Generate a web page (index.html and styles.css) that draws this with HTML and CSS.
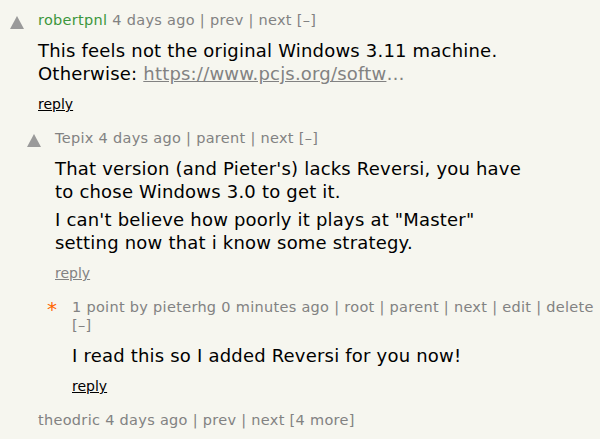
FILE: index.html
```html
<!DOCTYPE html>
<html>
<head>
<meta charset="utf-8">
<link rel="stylesheet" href="styles.css">
</head>
<body>
<div class="thread">
  <div class="comment lvl0">
    <div class="vote"><span class="arrow"></span></div>
    <div class="body">
      <div class="head"><span class="user new">robertpnl</span> 4 days ago | prev | next [–]</div>
      <div class="text">
        <p>This feels not the original Windows 3.11 machine. Otherwise: <a class="link" href="#">https://www.pcjs.org/softw</a><span class="ell">…</span></p>
      </div>
      <div class="reply"><a href="#">reply</a></div>
    </div>
  </div>
  <div class="comment lvl1">
    <div class="vote"><span class="arrow"></span></div>
    <div class="body">
      <div class="head">Tepix 4 days ago | parent | next [–]</div>
      <div class="text">
        <p>That version (and Pieter's) lacks Reversi, you have to chose Windows 3.0 to get it.</p>
        <p>I can't believe how poorly it plays at "Master" setting now that i know some strategy.</p>
      </div>
      <div class="reply faded"><a href="#">reply</a></div>
    </div>
  </div>
  <div class="comment lvl2">
    <div class="vote"><span class="star">*</span></div>
    <div class="body">
      <div class="head">1 point by pieterhg 0 minutes ago | root | parent | next | edit | delete [–]</div>
      <div class="text">
        <p>I read this so I added Reversi for you now!</p>
      </div>
      <div class="reply"><a href="#">reply</a></div>
    </div>
  </div>
  <div class="comment lvl0">
    <div class="vote"></div>
    <div class="body">
      <div class="head">theodric 4 days ago | prev | next [4 more]</div>
    </div>
  </div>
</div>
</body>
</html>
```
FILE: styles.css
```css
html, body {
  margin: 0;
  padding: 0;
  background: #f6f6ef;
}
body {
  font-family: "DejaVu Sans", Verdana, sans-serif;
  color: #000;
}
.thread {
  padding-top: 11px;
}
.comment {
  display: flex;
  margin-bottom: 16px;
}
.lvl1 { padding-left: 17px; }
.lvl2 { padding-left: 34px; }
.vote {
  width: 38px;
  flex: none;
  position: relative;
}
.arrow {
  position: absolute;
  left: 10px;
  top: 5px;
  width: 0;
  height: 0;
  border-left: 7px solid transparent;
  border-right: 7px solid transparent;
  border-bottom: 13px solid #9a9a9a;
}
.star {
  position: absolute;
  left: 13px;
  top: 1px;
  color: #ff6600;
  font-size: 20px;
  line-height: 20px;
}
.body {
  flex: 1;
  min-width: 0;
}
.head {
  font-size: 14.5px;
  letter-spacing: 0.3px;
  line-height: 18px;
  color: #828282;
}
.user.new { color: #3c963c; }
.text {
  margin-top: 10px;
  margin-right: 70px;
  font-size: 18px;
  letter-spacing: 0.2px;
  line-height: 23px;
}
.text p { margin: 0 0 5px; }
.text p:last-child { margin-bottom: 0; }
.link { color: #828282; }
.ell { color: #828282; }
.reply {
  margin-top: 10px;
  font-size: 14px;
  line-height: 18px;
}
.reply a { color: #000; text-decoration: underline; }
.reply.faded a { color: #828282; }
```
